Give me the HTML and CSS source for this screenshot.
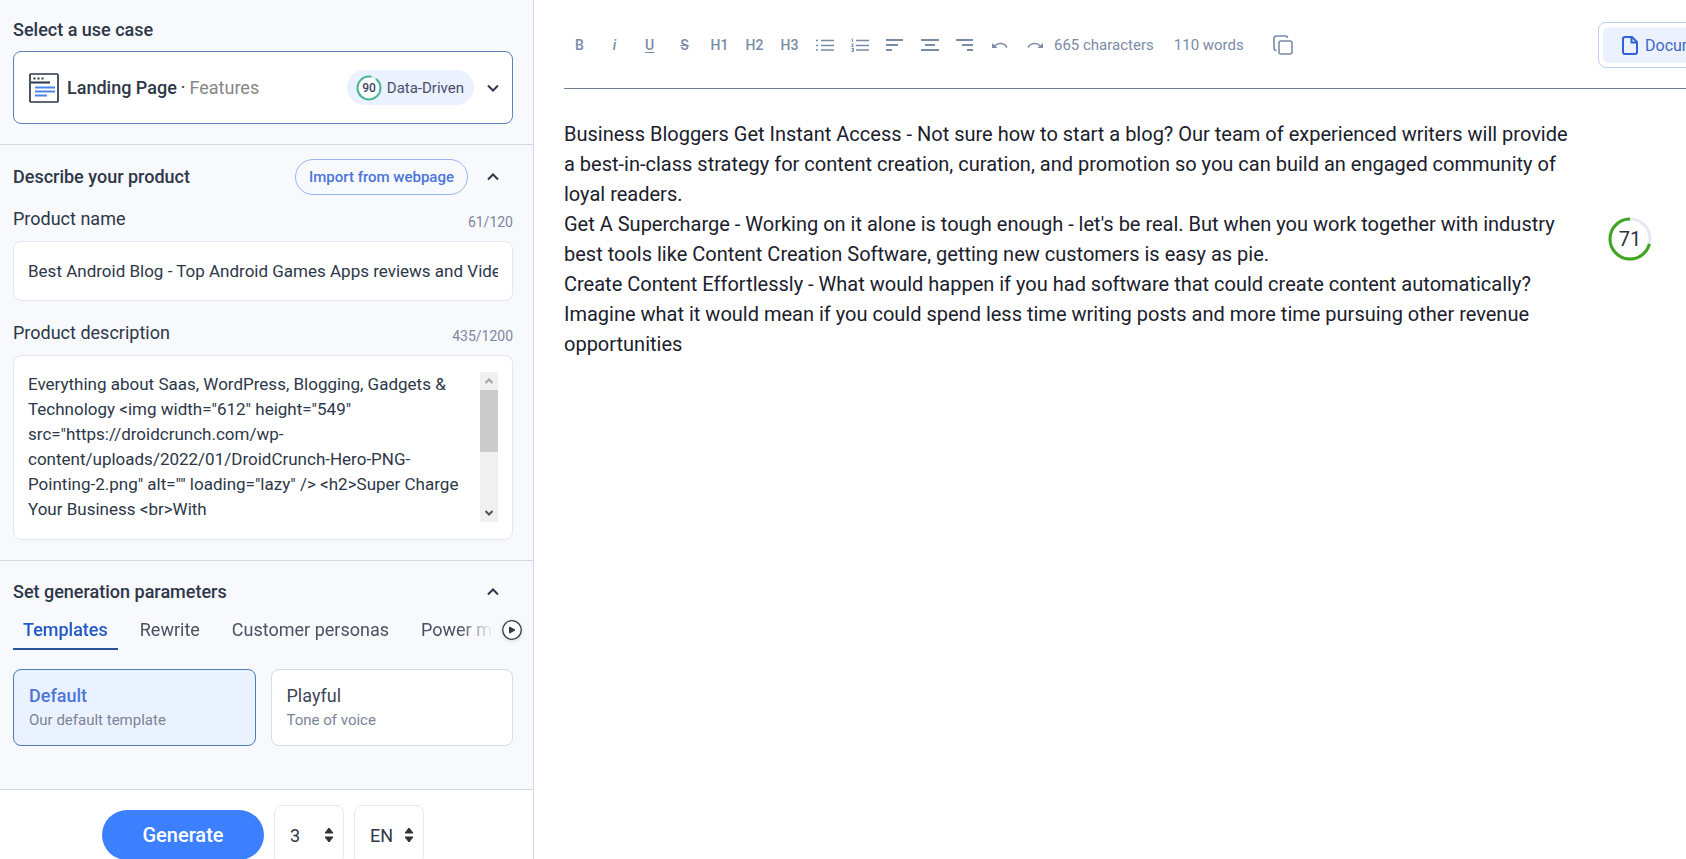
FILE: index.html
```html
<!DOCTYPE html>
<html lang="en">
<head>
<meta charset="utf-8">
<title>Content editor</title>
<link rel="stylesheet" href="styles.css">
</head>
<body>
<div class="app">
  <aside class="sidebar">
    <section class="section use-case">
      <h2 class="heading">Select a use case</h2>
      <button class="case-card" type="button">
        <svg class="case-icon" width="30" height="30" viewBox="0 0 30 30" fill="none" stroke-width="1.700">
          <rect x="1" y="1" width="28" height="28" rx="1" stroke="#2d3748"/>
          <path d="M4.500 5.500h2M8.500 5.500h2M12.500 5.500h2M2 9.500h19" stroke="#2d3748" stroke-width="2"/>
          <path d="M6 14.500h20M6 18.500h20M6 22.500h12" stroke="#4a86e8" stroke-width="2"/>
        </svg>
        <span class="case-name">Landing Page</span>
        <span class="case-dot">·</span>
        <span class="case-type">Features</span>
        <span class="badge">
          <svg width="26" height="26" viewBox="0 0 26 26">
            <circle cx="13" cy="13" r="11.500" fill="#fff" stroke="#dfe6f5" stroke-width="2"/>
            <circle cx="13" cy="13" r="11.500" fill="none" stroke="#4db893" stroke-width="2" stroke-dasharray="65 80" transform="rotate(-48 13 13)" stroke-linecap="round"/>
            <text x="13" y="17" text-anchor="middle" class="badge-score">90</text>
          </svg>
          Data-Driven
        </span>
        <svg class="chevron" width="12" height="8" viewBox="0 0 12 8"><path d="M1 1.500l5 5 5-5"/></svg>
      </button>
    </section>

    <section class="section product">
      <div class="section-head">
        <h2 class="heading">Describe your product</h2>
        <button class="import" type="button">Import from webpage</button>
        <button class="toggle" type="button" aria-label="Collapse product"><svg class="chevron" width="12" height="8" viewBox="0 0 12 8"><path d="M1 6.500l5-5 5 5"/></svg></button>
      </div>
      <div class="field-head">
        <label for="name">Product name</label><span class="count">61/120</span>
      </div>
      <input class="box text-input" id="name" type="text" value="Best Android Blog - Top Android Games Apps reviews and Videos">
      <div class="field-head second">
        <label for="desc">Product description</label><span class="count">435/1200</span>
      </div>
      <div class="box area">
        <textarea id="desc" rows="6" spellcheck="false">Everything about Saas, WordPress, Blogging, Gadgets &amp; Technology &lt;img width="612" height="549" src="https://droidcrunch.com/wp-content/uploads/2022/01/DroidCrunch-Hero-PNG-Pointing-2.png" alt="" loading="lazy" /&gt; &lt;h2&gt;Super Charge Your Business &lt;br&gt;With</textarea>
        <div class="scrollbar" aria-hidden="true">
          <svg width="18" height="18" viewBox="0 0 18 18"><path d="M5.500 11l3.500-3.500 3.500 3.500" fill="none" stroke="#a3a3a3" stroke-width="2"/></svg>
          <span class="thumb"></span>
          <svg width="18" height="18" viewBox="0 0 18 18"><path d="M5.500 7l3.500 3.500 3.500-3.500" fill="none" stroke="#505050" stroke-width="2"/></svg>
        </div>
      </div>
    </section>

    <section class="section params">
      <div class="section-head">
        <h2 class="heading">Set generation parameters</h2>
        <button class="toggle" type="button" aria-label="Collapse parameters"><svg class="chevron" width="12" height="8" viewBox="0 0 12 8"><path d="M1 6.500l5-5 5 5"/></svg></button>
      </div>
      <div class="tab-row">
        <div class="tabs">
          <button class="tab active" type="button">Templates</button>
          <button class="tab" type="button">Rewrite</button>
          <button class="tab" type="button">Customer personas</button>
          <button class="tab" type="button">Power mode</button>
        </div>
        <button class="next" type="button" aria-label="More tabs"><svg width="20" height="20" viewBox="0 0 20 20"><circle cx="10" cy="10" r="9.300" fill="#fff" stroke="#2d3748" stroke-width="1.300"/><path d="M7.500 7v6l5.500-3z" fill="#2d3748" stroke="#2d3748" stroke-linejoin="round"/></svg></button>
      </div>
      <div class="templates">
        <button class="template selected" type="button"><span class="template-name">Default</span><span class="template-note">Our default template</span></button>
        <button class="template" type="button"><span class="template-name">Playful</span><span class="template-note">Tone of voice</span></button>
      </div>
    </section>

    <footer class="actions">
      <button class="generate" type="button">Generate</button>
      <div class="picker">
        <select aria-label="Number of results"><option>3</option></select>
        <svg width="10" height="16" viewBox="0 0 10 16"><path d="M5 1l4 5H1zM5 15L1 10h8z"/></svg>
      </div>
      <div class="picker">
        <select aria-label="Language"><option>EN</option></select>
        <svg width="10" height="16" viewBox="0 0 10 16"><path d="M5 1l4 5H1zM5 15L1 10h8z"/></svg>
      </div>
    </footer>
  </aside>

  <main class="editor">
    <div class="toolbar">
      <div class="tools">
        <button class="tool" type="button" aria-label="Bold">B</button>
        <button class="tool italic" type="button" aria-label="Italic">i</button>
        <button class="tool underline" type="button" aria-label="Underline">U</button>
        <button class="tool strike" type="button" aria-label="Strikethrough">S</button>
        <button class="tool" type="button">H1</button>
        <button class="tool" type="button">H2</button>
        <button class="tool" type="button">H3</button>
        <button class="tool" type="button" aria-label="Bulleted list"><svg width="18" height="14" viewBox="0 0 18 14"><path d="M5 2.500h13M5 7.500h13M5 12h13M0 2.500h2M0 7.500h2M0 12h2"/></svg></button>
        <button class="tool" type="button" aria-label="Numbered list"><svg width="18" height="14" viewBox="0 0 18 14"><path d="M5 2.500h13M5 7.500h13M5 12h13"/><path class="fine" d="M.5 1h1v3M.5 6H2.500L.5 8.500H2.500M.5 10.500H2.500V13.500H.5M1 12h1.500"/></svg></button>
        <button class="tool" type="button" aria-label="Align left"><svg width="18" height="14" viewBox="0 0 18 14"><path class="bar" d="M0 2h17M0 7h12M0 12h6"/></svg></button>
        <button class="tool" type="button" aria-label="Align center"><svg width="18" height="14" viewBox="0 0 18 14"><path class="bar" d="M0 2h18M4 7h10M0 12h18"/></svg></button>
        <button class="tool" type="button" aria-label="Align right"><svg width="18" height="14" viewBox="0 0 18 14"><path class="bar" d="M0 2h17M6 7h11M11 12h6"/></svg></button>
        <button class="tool" type="button" aria-label="Undo"><svg width="16" height="14" viewBox="0 0 16 14"><path d="M2.500 8C6 4.500 12 4.500 15 9.500"/><path class="solid" d="M0 5v5h5.500z"/></svg></button>
        <button class="tool" type="button" aria-label="Redo"><svg width="16" height="14" viewBox="0 0 16 14"><path d="M13.500 8C10 4.500 4 4.500 1 9.500"/><path class="solid" d="M16 5v5h-5.500z"/></svg></button>
        <span class="stat">665 characters</span>
        <span class="stat">110 words</span>
        <button class="copy" type="button" aria-label="Copy"><svg width="20" height="20" viewBox="0 0 20 20"><rect x="6" y="6" width="13" height="13" rx="2"/><path d="M3.500 15.500C2 15.500 1 14.500 1 13V3.500C1 2 2 1 3.500 1H12.500C14 1 14.500 1.500 14.500 3"/></svg></button>
      </div>
      <div class="modes">
        <button class="mode" type="button"><svg width="16" height="19" viewBox="0 0 16 19"><path d="M10 1H3Q1 1 1 3V16Q1 18 3 18H13Q15 18 15 16V6z"/><path d="M9.500 1V6.500H15"/></svg>Document</button>
      </div>
    </div>
    <div class="page">
      <article class="copy-text" contenteditable="true" spellcheck="false">
        <p>Business Bloggers Get Instant Access - Not sure how to start a blog? Our team of experienced writers will provide a best-in-class strategy for content creation, curation, and promotion so you can build an engaged community of loyal readers.</p>
        <p>Get A Supercharge - Working on it alone is tough enough - let's be real. But when you work together with industry best tools like Content Creation Software, getting new customers is easy as pie.</p>
        <p>Create Content Effortlessly - What would happen if you had software that could create content automatically? Imagine what it would mean if you could spend less time writing posts and more time pursuing other revenue opportunities</p>
      </article>
      <svg class="score" width="44" height="44" viewBox="0 0 44 44">
        <circle cx="22" cy="22" r="20" fill="none" stroke="#e6e9f2" stroke-width="3"/>
        <circle cx="22" cy="22" r="20" fill="none" stroke="#3fa51f" stroke-width="3" pathLength="100" stroke-dasharray="71 100" transform="matrix(0 -1 -1 0 44 44)"/>
        <text x="22" y="29" text-anchor="middle">71</text>
      </svg>
    </div>
  </main>
</div>
</body>
</html>
```
FILE: styles.css
```css
* { box-sizing: border-box; }
body { margin: 0; font-family: Roboto, "Liberation Sans", sans-serif; font-size: 18px; color: #2d3748; background: #fff; }
button, input, select, textarea { font: inherit; color: inherit; margin: 0; }
button { padding: 0; border: 0; background: none; cursor: pointer; }
h2, p { margin: 0; }
svg { display: block; flex: none; }

.app { display: flex; height: 100vh; overflow: hidden; }
.sidebar { flex: none; width: 534px; border-right: 1px solid #d0d8e6; background: #f7f9fd; }
.section { padding: 16px 20px 20px 13px; border-bottom: 1px solid #d0d8e6; }
.heading { font-size: 18px; line-height: 28px; font-weight: 500; }
.chevron path { fill: none; stroke: #2d3748; stroke-width: 2; }

.case-card { display: flex; align-items: center; width: 100%; height: 73px; margin-top: 7px; padding: 0 13px 0 15px; border: 1px solid #5b82bd; border-radius: 8px; background: #fff; }
.case-name { margin-left: 8px; font-weight: 500; }
.case-dot { margin: 0 4px; }
.case-type { color: #868686; }
.badge { display: flex; align-items: center; gap: 5px; height: 35px; margin: 0 13px 0 auto; padding: 0 10px 0 9px; border-radius: 18px; background: #ebf1ff; color: #4a5068; font-size: 15px; }
.badge-score { font-size: 12px; font-weight: 500; fill: #3c4560; }

.section-head { display: flex; align-items: center; min-height: 36px; }
.section-head .heading { flex: 1; }
.import { height: 36px; padding: 0 13px; border: 1px solid #9ab5ec; border-radius: 18px; color: #4b76d8; font-size: 15px; font-weight: 500; }
.toggle { display: grid; place-items: center; width: 24px; height: 24px; margin: 0 8px 0 13px; }
.product { padding-top: 14px; }
.field-head { display: flex; align-items: center; justify-content: space-between; margin: 10px 0 8px; line-height: 28px; }
.count { padding-top: 6px; line-height: 22px; font-size: 14px; color: #7e869f; }
.box { width: 100%; border: 1px solid #e2e6f1; border-radius: 8px; background: #fff; padding: 16px 14px; font-size: 17px; }
.text-input { display: block; height: 60px; outline: 0; }
.second { margin: 18px 0 8px; }
.area { display: flex; padding-bottom: 17px; }
.area textarea { flex: 1; min-width: 0; padding: 0 8px 0 0; border: 0; outline: 0; resize: none; overflow: hidden; background: none; line-height: 25px; }
.scrollbar { display: flex; flex-direction: column; justify-content: space-between; width: 18px; background: #f0f0f0; }
.thumb { height: 62px; margin-bottom: auto; background: #cbcbcb; }

.params { padding: 13px 20px 43px 13px; }
.tab-row { display: flex; align-items: center; margin-right: -9px; }
.tabs { display: flex; flex: 1; gap: 12px; min-width: 0; overflow: hidden; mask-image: linear-gradient(to right, #000 93%, transparent 100%); }
.tab { flex: none; height: 40px; padding: 0 10px; border-bottom: 2px solid transparent; color: #4a5160; }
.tab.active { border-color: #285299; color: #2459c4; font-weight: 500; }
.next { margin-left: 9px; border-radius: 50%; box-shadow: 0 1px 4px rgb(0 0 0 / 15%); }
.templates { display: grid; grid-template-columns: 1fr 1fr; gap: 15px; margin-top: 19px; }
.template { display: flex; flex-direction: column; height: 77px; padding: 12px 15px; border: 1px solid #d3dced; border-radius: 8px; background: #fff; text-align: left; }
.template-name { line-height: 28px; color: #3e4554; }
.template-note { line-height: 20px; font-size: 15px; color: #7b8398; }
.selected { border-color: #5179b5; background: #ebf2ff; }
.selected .template-name { color: #4b76d8; font-weight: 500; }

.actions { display: flex; align-items: center; justify-content: center; gap: 10px; padding: 15px 7px 16px 0; background: #fff; }
.generate { width: 162px; height: 50px; border-radius: 25px; background: #3d80ff; color: #fff; font-size: 20px; font-weight: 500; }
.picker { display: flex; align-items: center; width: 70px; height: 60px; padding-right: 9px; border: 1px solid #e7eaf3; border-radius: 8px; background: #fff; }
.picker select { flex: 1; min-width: 0; height: 58px; padding: 0 0 0 15px; border: 0; outline: 0; appearance: none; background: none; }
.picker path { fill: #2f343b; stroke: #2f343b; stroke-linejoin: round; }

.editor { flex: 1; min-width: 0; padding-left: 30px; }
.toolbar { display: grid; grid-template-columns: minmax(0, 1fr) 88px; align-items: center; height: 89px; padding-top: 2px; border-bottom: 1px solid #718096; }
.tools { display: flex; align-items: center; margin-left: -2px; white-space: nowrap; color: #7a8ba6; }
.tool { display: grid; place-items: center; flex: none; width: 35px; height: 32px; font-size: 14px; font-weight: 500; }
.tool path { fill: none; stroke: #7a8ba6; stroke-width: 1.5; }
.tool .bar { stroke-width: 2; }
.tool .fine { stroke-width: 1; }
.tool .solid { fill: #7a8ba6; stroke: none; }
.italic { font-style: italic; }
.underline { text-decoration: underline; text-underline-offset: 2px; }
.strike { text-decoration: line-through; }
.stat { margin: 0 18px 0 2px; font-size: 15px; }
.copy { margin-left: 11px; }
.copy svg { fill: none; stroke: #7a8ba6; stroke-width: 1.6; }
.modes { width: 240px; padding: 4px; border: 1px solid #bcd0ee; border-radius: 8px; background: #fff; }
.mode { display: flex; align-items: center; gap: 7px; width: 150px; height: 36px; padding-left: 19px; border-radius: 6px; background: #ebf1ff; color: #4268c4; font-size: 16px; }
.mode svg { fill: none; stroke: #2f62d9; stroke-width: 2; stroke-linejoin: round; }

.page { display: grid; grid-template-columns: minmax(0, 1fr) 88px; padding-top: 30px; }
.copy-text { padding-right: 20px; outline: 0; font-size: 20px; line-height: 30px; color: #1a202c; }
.score { margin: 98px 0 0 10px; }
.score text { font-size: 20px; fill: #2d3340; }
```
